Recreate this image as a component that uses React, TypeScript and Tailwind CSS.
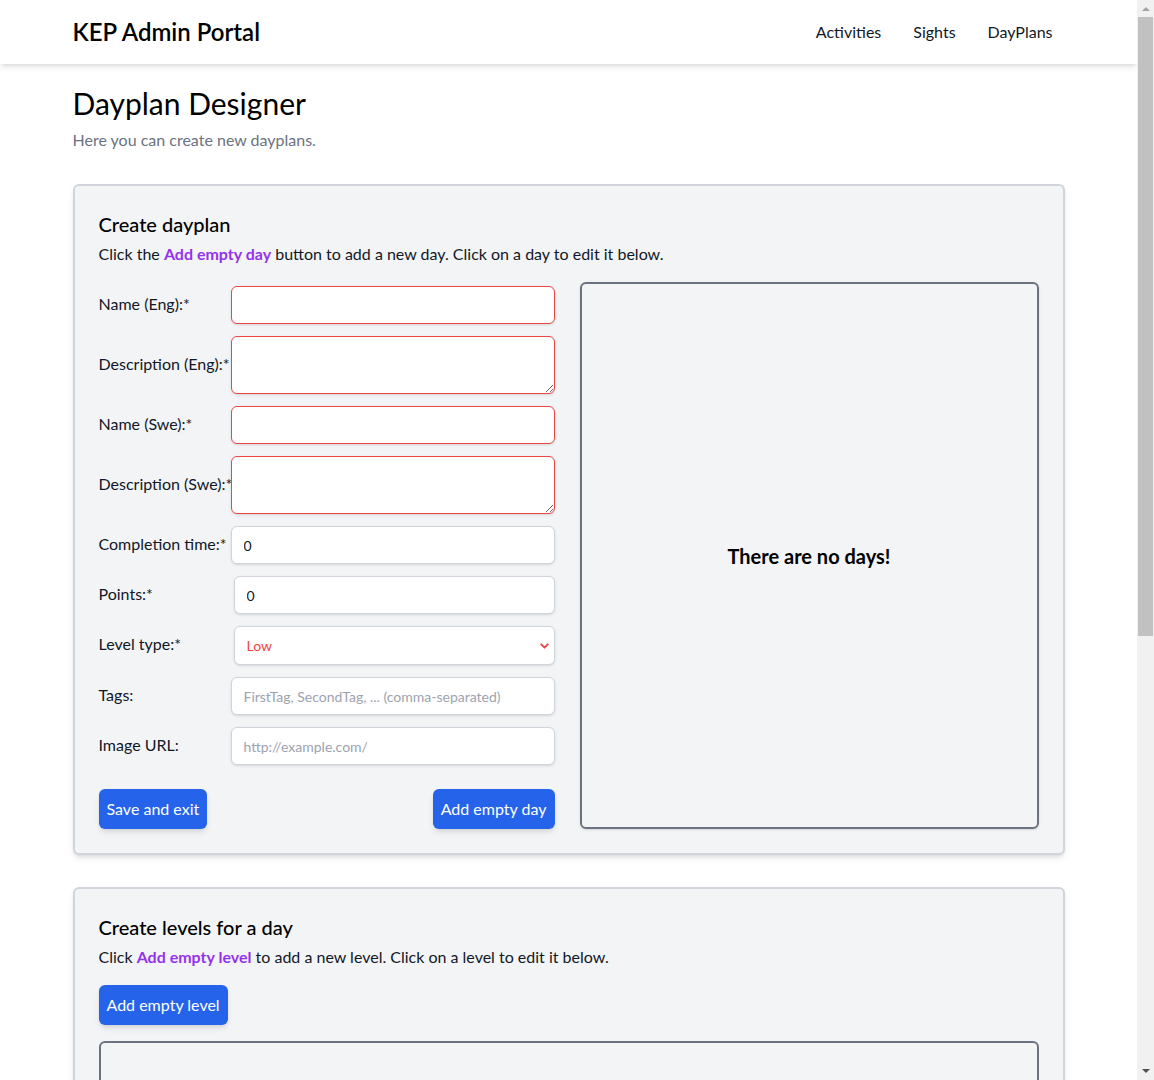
import React, { FC } from "react";
import { ChevronDown } from "lucide-react";

const font = { fontFamily: "Lato, 'Noto Sans', sans-serif" };

const NavBar: FC = () => (
  <nav className="bg-white shadow-md">
    <div className="max-w-[1024px] mx-auto px-4 h-16 flex items-center justify-between">
      <span className="text-2xl font-semibold text-black">KEP Admin Portal</span>
      <div className="flex items-center gap-2">
        {["Activities", "Sights", "DayPlans"].map((l) => (
          <a key={l} className="px-3 text-base text-[#111827] cursor-pointer">
            {l}
          </a>
        ))}
      </div>
    </div>
  </nav>
);

type RowProps = {
  label: string;
  indent?: boolean;
  children: React.ReactNode;
};

const Row: FC<RowProps> = ({ label, indent, children }) => (
  <div className="flex items-center">
    <label className="w-[132px] shrink-0 mb-[3px] text-base text-[#111827] whitespace-nowrap">{label}</label>
    <div className={indent ? "flex-1 pl-[3px]" : "flex-1"}>{children}</div>
  </div>
);

const inputBase =
  "w-full bg-white rounded-md border px-3 py-2 text-sm text-[#111827] shadow-sm outline-none placeholder:text-[#9ca3af]";

const btn = "bg-[#2563eb] text-white text-base px-2 py-2 rounded-md shadow-md";

const DayplanForm: FC = () => (
  <div className="flex flex-col">
    <div className="flex flex-col gap-3 pt-1">
      <Row label="Name (Eng):*">
        <input className={`${inputBase} border-[#ef4444] h-[38px]`} />
      </Row>
      <Row label="Description (Eng):*">
        <textarea className={`${inputBase} border-[#ef4444] h-[58px] block`} />
      </Row>
      <Row label="Name (Swe):*">
        <input className={`${inputBase} border-[#ef4444] h-[38px]`} />
      </Row>
      <Row label="Description (Swe):*">
        <textarea className={`${inputBase} border-[#ef4444] h-[58px] block`} />
      </Row>
      <Row label="Completion time:*">
        <input className={`${inputBase} border-[#d1d5db] h-[38px]`} defaultValue="0" />
      </Row>
      <Row label="Points:*" indent>
        <input className={`${inputBase} border-[#d1d5db] h-[38px]`} defaultValue="0" />
      </Row>
      <Row label="Level type:*" indent>
        <div className="relative">
          <select className={`${inputBase} border-[#d1d5db] h-[39px] appearance-none text-[#ef4444]`}>
            <option>Low</option>
          </select>
          <ChevronDown
            size={13}
            strokeWidth={3.5}
            className="absolute right-[4px] top-1/2 -translate-y-1/2 text-[#ef4444] pointer-events-none"
          />
        </div>
      </Row>
      <Row label="Tags:">
        <input
          className={`${inputBase} border-[#d1d5db] h-[38px]`}
          placeholder="FirstTag, SecondTag, ... (comma-separated)"
        />
      </Row>
      <Row label="Image URL:">
        <input className={`${inputBase} border-[#d1d5db] h-[38px]`} placeholder="http://example.com/" />
      </Row>
    </div>
    <div className="flex justify-between mt-6">
      <button className={btn}>Save and exit</button>
      <button className={btn}>Add empty day</button>
    </div>
  </div>
);

// the page's scroll bar, as it shows in the screenshot
const ScrollBar: FC = () => (
  <div className="w-[17px] shrink-0 h-full bg-[#f1f1f1] flex flex-col items-center">
    <div className="h-[17px] flex items-center justify-center">
      <svg width="8" height="5" viewBox="0 0 8 5">
        <path d="M0 5 L4 1 L8 5 Z" fill="#a3a3a3" />
      </svg>
    </div>
    <div className="w-[15px] h-[619px] bg-[#c1c1c1]" />
    <div className="flex-1" />
    <div className="h-[17px] flex items-center justify-center">
      <svg width="8" height="5" viewBox="0 0 8 5">
        <path d="M0 0 L4 4 L8 0 Z" fill="#505050" />
      </svg>
    </div>
  </div>
);

export default function App() {
  return (
    <div className="h-screen flex bg-white text-[#111827]" style={font}>
      <div className="flex-1 overflow-y-auto [scrollbar-width:none]">
        <NavBar />
        <main className="max-w-[1024px] mx-auto px-4 pt-[21px] pb-16">
          <h1 className="text-3xl text-black">Dayplan Designer</h1>
          <p className="mt-[7px] text-base text-[#6b7280]">Here you can create new dayplans.</p>

          <section className="mt-8 bg-[#f3f4f6] border-2 border-[#d1d5db] rounded-md shadow-md p-6">
            <h2 className="text-xl font-medium text-black">Create dayplan</h2>
            <p className="mt-1 text-base">
              Click the <span className="font-bold text-[#9333ea]">Add empty day</span> button to add a new day.
              Click on a day to edit it below.
            </p>
            <div className="mt-4 grid grid-cols-[456px_1fr] gap-[25px]">
              <DayplanForm />
              <div className="border-2 border-[#6b7280] rounded-md flex items-center justify-center shadow-sm">
                <span className="text-xl font-bold text-black">There are no days!</span>
              </div>
            </div>
          </section>

          <section className="mt-8 bg-[#f3f4f6] border-2 border-[#d1d5db] rounded-md shadow-md p-6">
            <h2 className="text-xl font-medium text-black">Create levels for a day</h2>
            <p className="mt-1 text-base">
              Click <span className="font-bold text-[#9333ea]">Add empty level</span> to add a new level. Click on a
              level to edit it below.
            </p>
            <button className={`mt-4 ${btn}`}>Add empty level</button>
            <div className="mt-4 h-64 border-2 border-[#6b7280] rounded-md" />
          </section>
        </main>
      </div>
      <ScrollBar />
    </div>
  );
}
